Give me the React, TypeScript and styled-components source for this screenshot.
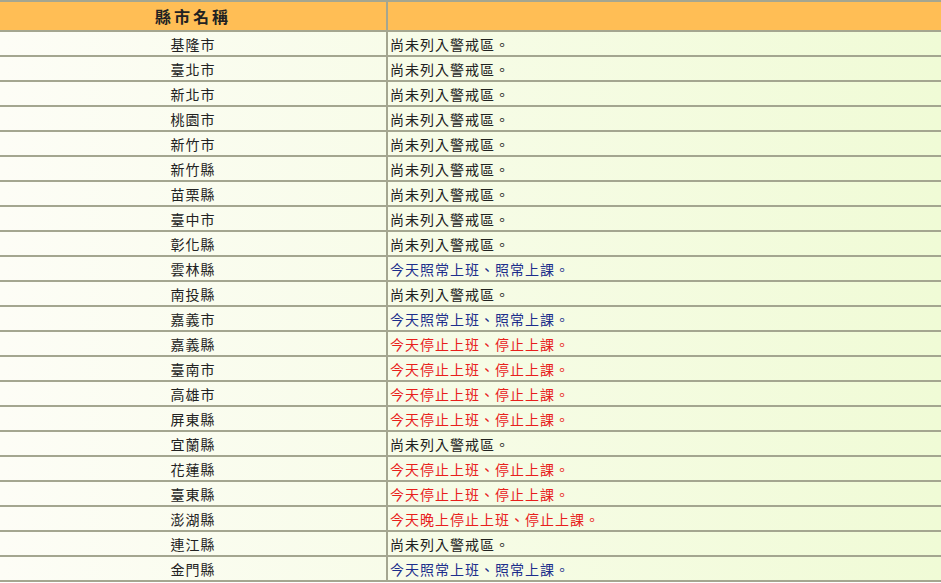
import React from "react";
import styled, { createGlobalStyle } from "styled-components";

const Global = createGlobalStyle`
  html, body { margin: 0; padding: 0; background: #fff; }
  body { font-family: "Noto Sans CJK TC", "Noto Sans", sans-serif; }
`;

const Table = styled.div`
  width: 941px;
  border-top: 2px solid #a4a690;
  background: linear-gradient(to right, #fdfdf6, #f0fbd6);
`;

const Row = styled.div<{ $head?: boolean }>`
  display: grid;
  grid-template-columns: 388px 1fr;
  height: ${(p) => (p.$head ? 28 : 23)}px;
  border-bottom: 2px solid #a4a690;
  background: ${(p) => (p.$head ? "#ffbe55" : "transparent")};
`;

const Name = styled.div<{ $head?: boolean }>`
  border-right: 2px solid #a4a690;
  display: flex;
  align-items: center;
  justify-content: center;
  font-size: ${(p) => (p.$head ? 16 : 14)}px;
  font-weight: ${(p) => (p.$head ? 700 : 400)};
  letter-spacing: ${(p) => (p.$head ? 3 : 1)}px;
  color: #222;
`;

const Status = styled.div<{ $tone: string }>`
  display: flex;
  align-items: center;
  padding-left: 2px;
  font-size: 14px;
  letter-spacing: 1px;
  color: ${(p) => (p.$tone === "red" ? "#e8201c" : p.$tone === "blue" ? "#1c2e8c" : "#222")};
`;

const N = "尚未列入警戒區。";
const B = "今天照常上班、照常上課。";
const R = "今天停止上班、停止上課。";
const data: [string, string, string][] = [
  ["基隆市", N, ""], ["臺北市", N, ""], ["新北市", N, ""], ["桃園市", N, ""],
  ["新竹市", N, ""], ["新竹縣", N, ""], ["苗栗縣", N, ""], ["臺中市", N, ""],
  ["彰化縣", N, ""], ["雲林縣", B, "blue"], ["南投縣", N, ""], ["嘉義市", B, "blue"],
  ["嘉義縣", R, "red"], ["臺南市", R, "red"], ["高雄市", R, "red"], ["屏東縣", R, "red"],
  ["宜蘭縣", N, ""], ["花蓮縣", R, "red"], ["臺東縣", R, "red"],
  ["澎湖縣", "今天晚上停止上班、停止上課。", "red"], ["連江縣", N, ""], ["金門縣", B, "blue"],
];

export default function App() {
  return (
    <>
      <Global />
      <Table>
        <Row $head>
          <Name $head>縣市名稱</Name>
          <Status $tone="">{""}</Status>
        </Row>
        {data.map(([n, s, t]) => (
          <Row key={n}>
            <Name>{n}</Name>
            <Status $tone={t}>{s}</Status>
          </Row>
        ))}
      </Table>
    </>
  );
}
